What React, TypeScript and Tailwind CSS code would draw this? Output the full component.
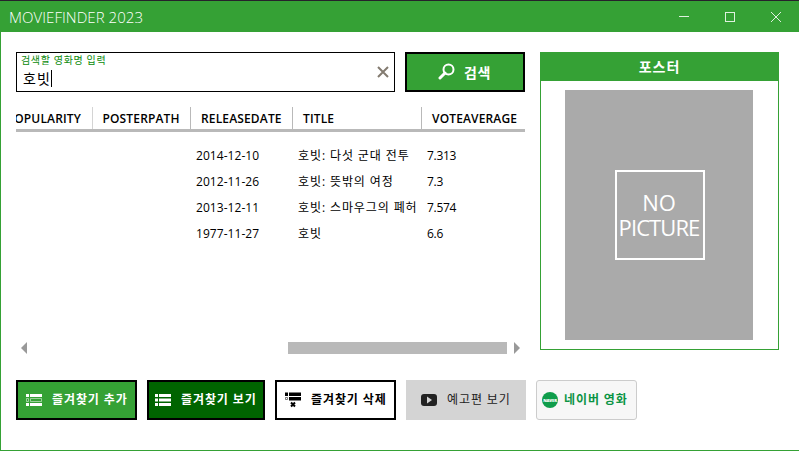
import type { ReactNode } from "react";

const movies = [
  { date: "2014-12-10", title: "호빗: 다섯 군대 전투", vote: "7.313" },
  { date: "2012-11-26", title: "호빗: 뜻밖의 여정", vote: "7.3" },
  { date: "2013-12-11", title: "호빗: 스마우그의 폐허", vote: "7.574" },
  { date: "1977-11-27", title: "호빗", vote: "6.6" },
];

function TitleBar() {
  return (
    <header className="flex h-[31px] shrink-0 items-center bg-[#35a135] pl-[9px] text-white">
      <h1 className="flex-1 pt-px text-[15px] leading-5 font-light tracking-[0.05px]">MOVIEFINDER 2023</h1>
      <svg className="h-[31px] w-[138px]" viewBox="0 0 138 31" fill="none" stroke="#dff1df" shapeRendering="crispEdges">
        <path d="M18 15.500h10M64.500 11.500h9v9h-9z" />
        <path d="M110 11l10 10M120 11l-10 10" shapeRendering="auto" />
      </svg>
    </header>
  );
}

function SearchRow() {
  return (
    <div className="flex h-10 gap-[10px]">
      <div className="flex w-[379px] border border-black">
        <div className="flex-1 pl-1">
          <p className="h-[13px] pt-px text-[10px] leading-[13px] tracking-[0.65px] text-[#0c8a0c]">검색할 영화명 입력</p>
          <div className="flex h-[25px] items-center pl-[2px]">
            <span className="pt-px text-[14px] leading-[18px] tracking-[1.1px]">호빗</span>
            <span className="h-[17px] w-px bg-black" />
          </div>
        </div>
        <svg className="mt-[13px] mr-[5px] size-3" viewBox="0 0 12 12" stroke="#837b70" strokeWidth="2">
          <path d="M1 1l10 10M11 1L1 11" />
        </svg>
      </div>
      <button className="flex w-[120px] items-center border-2 border-black bg-[#35a135] pl-[31px] text-[14px] font-bold text-white">
        <svg className="mr-[9px] mb-[2px] size-[17px]" viewBox="0 0 17 17" fill="none" stroke="white">
          <circle cx="10.500" cy="6.500" r="5" strokeWidth="2" />
          <path d="M7 10l-5 5" strokeWidth="3" strokeLinecap="round" />
        </svg>
        <span className="tracking-[0.7px]">검색</span>
      </button>
    </div>
  );
}

function MovieGrid() {
  return (
    <div className="mt-[15px] flex h-[251px] flex-col overflow-hidden">
      <div className="flex h-[25px] shrink-0 border-b-3 border-[#b9b9b9] text-[12px] leading-[23px] font-semibold tracking-[0.15px] whitespace-nowrap">
        <div className="flex w-[77px] justify-end overflow-hidden border-r border-[#d4d4d4] pr-[11px]">
          <span>POPULARITY</span>
        </div>
        <div className="w-[98px] border-r border-[#b9b9b9] pl-[9.500px]">POSTERPATH</div>
        <div className="w-[102px] border-r border-[#b9b9b9] pl-[10px]">RELEASEDATE</div>
        <div className="w-[129px] border-r border-[#b9b9b9] pl-[10px]">TITLE</div>
        <div className="pl-[10px]">VOTEAVERAGE</div>
      </div>
      <div className="flex-1 pt-[11px]">
        {movies.map((m) => (
          <div key={m.date} className="flex h-[26px] items-center pl-[180px] text-[12px] whitespace-nowrap">
            <span className="w-[102px] tracking-[0.05px]">{m.date}</span>
            <span className="w-[129px] tracking-[0.9px]">{m.title}</span>
            <span className="tracking-[-0.3px]">{m.vote}</span>
          </div>
        ))}
      </div>
      <div className="flex h-[16px] items-start">
        <svg className="ml-[5px] h-3 w-[6px]" viewBox="0 0 6 12" fill="#999">
          <path d="M6 0v12L0 6z" />
        </svg>
        <div className="ml-[261px] h-3 w-[219px] bg-[#b9b9b9]" />
        <svg className="ml-[7px] h-3 w-[6px]" viewBox="0 0 6 12" fill="#999">
          <path d="M0 0v12l6-6z" />
        </svg>
      </div>
    </div>
  );
}

function Poster() {
  return (
    <section className="h-[298px] w-[239px] border border-[#35a135]">
      <h2 className="flex h-7 items-center justify-center bg-[#35a135] pb-px text-[14px] font-bold tracking-[1px] text-white">포스터</h2>
      <div className="mt-[9px] ml-6 flex h-[250px] w-[188px] items-center justify-center bg-[#aaaaaa] pl-[2px]">
        <div className="flex size-[90px] flex-col items-center justify-center border-2 border-white text-[22px] leading-[25px] whitespace-nowrap text-white">
          <span className="pr-[2px]">NO</span>
          <span className="pr-[2px] tracking-[-0.9px]">PICTURE</span>
        </div>
      </div>
    </section>
  );
}

function ActionButton({ className, icon, children }: { className: string; icon: ReactNode; children: ReactNode }) {
  return (
    <button className={"flex h-10 items-center text-[12px] tracking-[0.9px] whitespace-nowrap " + className}>
      {icon}
      <span>{children}</span>
    </button>
  );
}

function ListIcon({ kind }: { kind: "add" | "view" | "remove" }) {
  return (
    <svg className="h-4 w-[17px] shrink-0" viewBox="0 0 17 16" fill="currentColor">
      {kind === "view" && <path d="M1 2h3v3H1zM5 2h12v3H5zM1 6.500h3v3H1zM5 6.500h12v3H5zM1 11h3v3H1zM5 11h12v3H5z" />}
      {kind === "add" && (
        <>
          <path d="M1 2h3v3H1zM5 2h12v3H5zM1 11h3v3H1zM5 11h12v3H5z" />
          <path d="M1.500 6.500h2v3h-2zM5.500 6.500h11v3h-11z" fill="none" stroke="currentColor" opacity=".5" />
        </>
      )}
      {kind === "remove" && (
        <>
          <path d="M1 .5h3v3.500H1zM5 .5h12v3.500H5zM5 5h12v3.500H5z" />
          <path d="M1.500 5.500h2v2h-2z" fill="none" stroke="currentColor" opacity=".5" />
          <path d="M7 10.500l4 4M11 10.500l-4 4" stroke="currentColor" strokeWidth="2" />
        </>
      )}
    </svg>
  );
}

export default function App() {
  return (
    <div className="flex h-[451px] w-[799px] flex-col overflow-hidden border-t border-[#26222b] bg-white font-['Open_Sans','Noto_Sans_CJK_KR',sans-serif] text-black">
      <TitleBar />
      <main className="flex-1 border-b border-l border-[#35a135] pt-5 pl-[15px]">
        <div className="flex gap-[15px]">
          <div className="w-[509px]">
            <SearchRow />
            <MovieGrid />
          </div>
          <Poster />
        </div>
        <div className="mt-[22px] flex gap-[10px]">
          <ActionButton className="w-[121px] gap-[10px] border-2 border-black bg-[#35a135] pl-[7px] font-bold text-white" icon={<ListIcon kind="add" />}>즐겨찾기 추가</ActionButton>
          <ActionButton className="w-[118px] gap-[10px] border-2 border-black bg-[#006400] pl-[5px] font-bold text-white" icon={<ListIcon kind="view" />}>즐겨찾기 보기</ActionButton>
          <ActionButton className="w-[121px] gap-[10px] border-2 border-black bg-white pl-[7px] font-bold" icon={<ListIcon kind="remove" />}>즐겨찾기 삭제</ActionButton>
          <ActionButton
            className="w-[120px] gap-[10px] bg-[#d4d4d4] pl-[15px] text-[#222]"
            icon={
              <svg className="h-3 w-4" viewBox="0 0 16 12">
                <rect width="16" height="12" rx="3" fill="#222" />
                <path d="M6 2.500v7l5-3.500z" fill="#d4d4d4" />
              </svg>
            }
          >
            예고편 보기
          </ActionButton>
          <ActionButton
            className="w-[101px] gap-[6px] rounded-[3px] border border-[#cccccc] bg-[#f7f7f7] pl-[5px] font-bold text-[#0b9444]"
            icon={
              <svg className="size-4" viewBox="0 0 16 16">
                <circle cx="8" cy="8" r="8" fill="#0f9d4b" />
                <text x="8" y="9.700" textAnchor="middle" fontSize="4.200" fontWeight="800" letterSpacing="-0.2" fill="white">NAVER</text>
              </svg>
            }
          >
            네이버 영화
          </ActionButton>
        </div>
      </main>
    </div>
  );
}
